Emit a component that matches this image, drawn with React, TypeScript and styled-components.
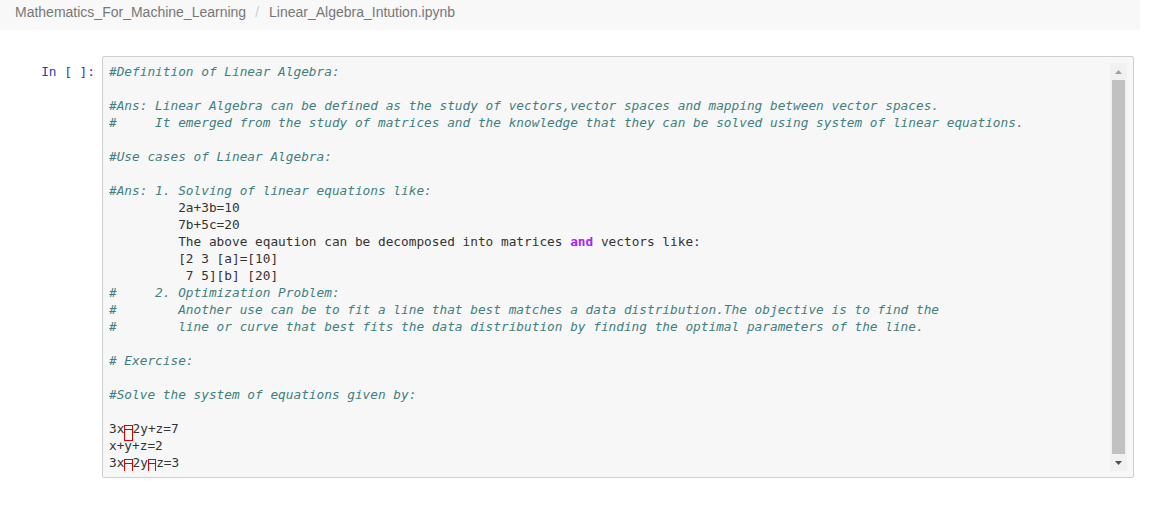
import React from "react";
import styled, { createGlobalStyle } from "styled-components";

const Global = createGlobalStyle`
  html, body { margin: 0; padding: 0; background: #fff; }
  #root { width: 1171px; height: 505px; overflow: hidden; }
`;

const Page = styled.div`
  display: flex;
  flex-direction: column;
`;

const Breadcrumb = styled.div`
  width: 1140px;
  height: 30px;
  box-sizing: border-box;
  background: #f8f8f8;
  padding: 4px 0 0 15px;
  font-family: "Liberation Sans", Arial, sans-serif;
  font-size: 14px;
  line-height: 16px;
  color: #777;
  display: flex;
`;

const Sep = styled.span`
  color: #ccc;
  padding: 0 10px 0 9px;
`;

const CellRow = styled.div`
  display: flex;
  margin-top: 26px;
`;

const Prompt = styled.div`
  width: 102px;
  box-sizing: border-box;
  padding: 7px 7px 0 0;
  text-align: right;
  font-family: "DejaVu Sans Mono", monospace;
  font-size: 12.78px;
  line-height: 17px;
  color: #303f9f;
  white-space: pre;
`;

const InputBox = styled.div`
  width: 1032px;
  height: 422px;
  box-sizing: border-box;
  border: 1px solid #cfcfcf;
  border-radius: 2px;
  background: #f7f7f7;
  padding: 6px;
  display: flex;
`;

const Code = styled.div`
  flex: 1;
  overflow: hidden;
  font-family: "DejaVu Sans Mono", monospace;
  font-size: 12.78px;
  line-height: 17px;
  color: #333;
`;

const Line = styled.div<{ $comment?: boolean }>`
  height: 17px;
  white-space: pre;
  color: ${(p) => (p.$comment ? "#408080" : "#333")};
  font-style: ${(p) => (p.$comment ? "italic" : "normal")};
`;

const Keyword = styled.span`
  color: #aa22ff;
  font-weight: bold;
`;

const Invalid = styled.span`
  position: relative;
  display: inline-block;
  width: 8.2px;
  height: 17px;
  line-height: 17px;
  vertical-align: top;
  text-align: center;
  &::after {
    content: "";
    position: absolute;
    left: 0;
    right: 0;
    top: 5px;
    height: 16px;
    box-sizing: border-box;
    border: 1px solid #e00000;
  }
`;

const Scrollbar = styled.div`
  width: 17px;
  background: #f1f1f1;
  display: flex;
  flex-direction: column;
`;

const ArrowBtn = styled.div`
  height: 17px;
  display: flex;
  align-items: center;
  justify-content: center;
`;

const Thumb = styled.div`
  flex: 1;
  margin: 0 2px;
  background: #c1c1c1;
`;

const Arrow = ({ up, color }: { up?: boolean; color: string }) => (
  <svg width="7" height="4" viewBox="0 0 7 4">
    {up ? (
      <polygon points="0,4 7,4 3.5,0" fill={color} />
    ) : (
      <polygon points="0,0 7,0 3.5,4" fill={color} />
    )}
  </svg>
);

const Dash = () => <Invalid>–</Invalid>;

export default function App() {
  return (
    <>
      <Global />
      <Page>
        <Breadcrumb>
          <span>Mathematics_For_Machine_Learning</span>
          <Sep>/</Sep>
          <span>Linear_Algebra_Intution.ipynb</span>
        </Breadcrumb>
        <CellRow>
          <Prompt>In [ ]:</Prompt>
          <InputBox>
            <Code>
              <Line $comment>#Definition of Linear Algebra:</Line>
              <Line />
              <Line $comment>
                #Ans: Linear Algebra can be defined as the study of vectors,vector spaces and mapping between vector spaces.
              </Line>
              <Line $comment>
                {"#     It emerged from the study of matrices and the knowledge that they can be solved using system of linear equations."}
              </Line>
              <Line />
              <Line $comment>#Use cases of Linear Algebra:</Line>
              <Line />
              <Line $comment>#Ans: 1. Solving of linear equations like:</Line>
              <Line>{"         2a+3b=10"}</Line>
              <Line>{"         7b+5c=20"}</Line>
              <Line>
                {"         The above eqaution can be decomposed into matrices "}
                <Keyword>and</Keyword>
                {" vectors like:"}
              </Line>
              <Line>{"         [2 3 [a]=[10]"}</Line>
              <Line>{"          7 5][b] [20]"}</Line>
              <Line $comment>{"#     2. Optimization Problem:"}</Line>
              <Line $comment>
                {"#        Another use can be to fit a line that best matches a data distribution.The objective is to find the"}
              </Line>
              <Line $comment>
                {"#        line or curve that best fits the data distribution by finding the optimal parameters of the line."}
              </Line>
              <Line />
              <Line $comment># Exercise:</Line>
              <Line />
              <Line $comment>#Solve the system of equations given by:</Line>
              <Line />
              <Line>
                3x<Dash />2y+z=7
              </Line>
              <Line>x+y+z=2</Line>
              <Line>
                3x<Dash />2y<Dash />z=3
              </Line>
            </Code>
            <Scrollbar>
              <ArrowBtn>
                <Arrow up color="#a3a3a3" />
              </ArrowBtn>
              <Thumb />
              <ArrowBtn>
                <Arrow color="#505050" />
              </ArrowBtn>
            </Scrollbar>
          </InputBox>
        </CellRow>
      </Page>
    </>
  );
}
